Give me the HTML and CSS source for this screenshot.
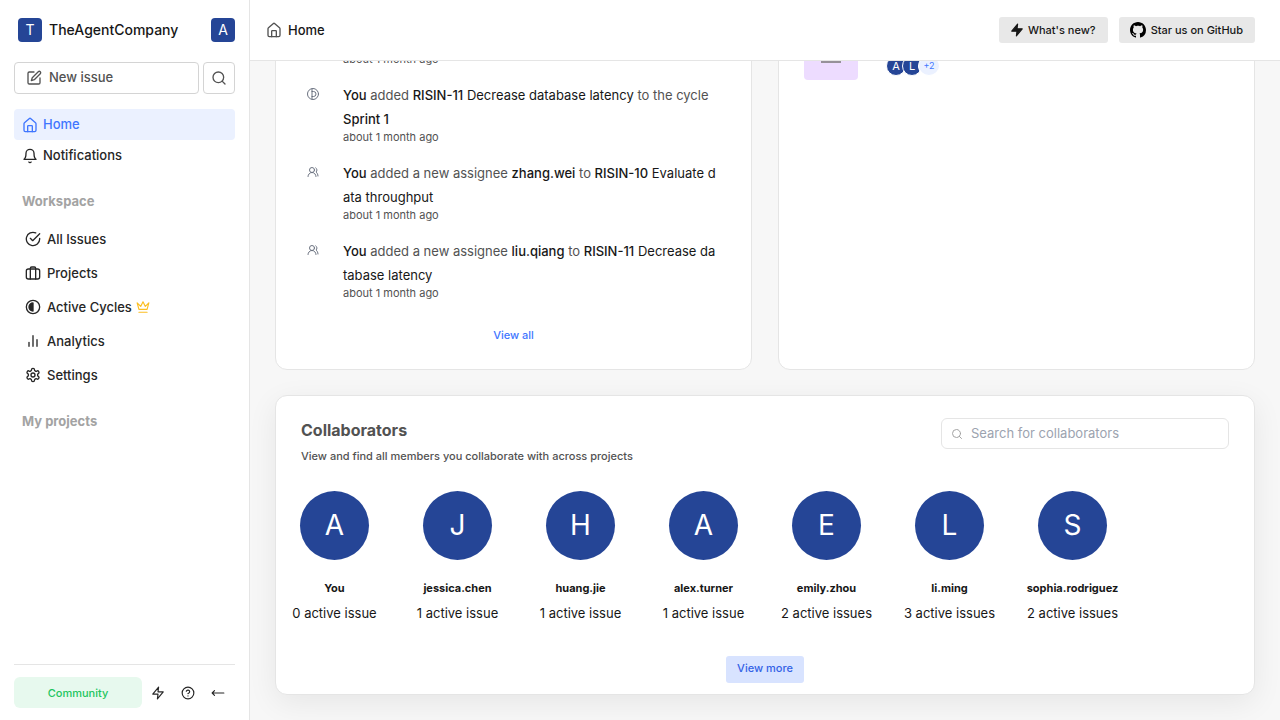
FILE: index.html
```html
<!DOCTYPE html>
<html lang="en">
<head>
<meta charset="utf-8">
<meta name="viewport" content="width=device-width, initial-scale=1">
<title>Home</title>
<link rel="stylesheet" href="styles.css">
</head>
<body>
<svg class="sprite" aria-hidden="true">
  <symbol id="home" viewBox="0 0 24 24"><path d="M3 10a2 2 0 0 1 .7-1.5l7-6a2 2 0 0 1 2.6 0l7 6A2 2 0 0 1 21 10v10a2 2 0 0 1-2 2H5a2 2 0 0 1-2-2z"/><path d="M8.500 22v-8a1 1 0 0 1 1-1h5a1 1 0 0 1 1 1v8"/></symbol>
  <symbol id="users" viewBox="0 0 24 24"><path d="M18 21a8 8 0 0 0-16 0"/><circle cx="10" cy="8" r="5"/><path d="M22 20c0-3.370-2-6.500-4-8a5 5 0 0 0-.45-8.300"/></symbol>
  <symbol id="search" viewBox="0 0 24 24"><circle cx="11" cy="11" r="8"/><path d="m21 21-4.300-4.300"/></symbol>
  <symbol id="bolt" viewBox="0 0 24 24"><path d="M13 2 3 14h9l-1 8 10-12h-9z"/></symbol>
</svg>
<div class="app">
  <aside class="sidebar">
    <div class="brand">
      <span class="tile">T</span>
      <span class="brand-name">TheAgentCompany</span>
      <button class="tile" type="button" aria-label="Account">A</button>
    </div>
    <div class="quick">
      <button class="new-issue" type="button">
        <svg class="icon i16" viewBox="0 0 24 24"><path d="M12 3H5a2 2 0 0 0-2 2v14a2 2 0 0 0 2 2h14a2 2 0 0 0 2-2v-7"/><path d="M18.400 2.600a2.120 2.120 0 0 1 3 3L12.400 14.600 8 16l1.400-4.400Z"/></svg>
        <span>New issue</span>
      </button>
      <button class="find" type="button" aria-label="Search"><svg class="icon i16"><use href="#search"/></svg></button>
    </div>
    <nav class="main-nav">
      <a class="nav-link active" href="#"><svg class="icon i16"><use href="#home"/></svg><span>Home</span></a>
      <a class="nav-link" href="#"><svg class="icon i16" viewBox="0 0 24 24"><path d="M6 8a6 6 0 0 1 12 0c0 7 3 9 3 9H3s3-2 3-9"/><path d="M10.300 21a1.940 1.940 0 0 0 3.400 0"/></svg><span>Notifications</span></a>
    </nav>
    <h2 class="group">Workspace</h2>
    <nav class="work-nav">
      <a href="#"><svg class="icon i16" viewBox="0 0 24 24"><path d="M22 11.080V12a10 10 0 1 1-5.930-9.140"/><path d="m8 11 3.500 3.500L22 4"/></svg><span>All Issues</span></a>
      <a href="#"><svg class="icon i16" viewBox="0 0 24 24"><rect x="2" y="6" width="20" height="15" rx="3"/><path d="M8 21V5a2 2 0 0 1 2-2h4a2 2 0 0 1 2 2v16"/></svg><span>Projects</span></a>
      <a href="#"><svg class="icon i16" viewBox="0 0 24 24"><circle cx="12" cy="12" r="10"/><path class="solid" d="M12 6a6 6 0 0 0 0 12z"/></svg><span>Active Cycles</span><svg class="icon i14 crown" viewBox="0 0 24 24"><path d="m2 5 3 11h14l3-11-6 6-4-8-4 8zM5 21h14"/></svg></a>
      <a href="#"><svg class="icon i16" viewBox="0 0 24 24"><path d="M18 20V10M12 20V4M6 20v-6"/></svg><span>Analytics</span></a>
      <a href="#"><svg class="icon i16" viewBox="0 0 24 24"><path d="M12.220 2h-.44a2 2 0 0 0-2 2v.18a2 2 0 0 1-1 1.730l-.43.25a2 2 0 0 1-2 0l-.15-.08a2 2 0 0 0-2.730.73l-.22.38a2 2 0 0 0 .73 2.730l.15.1a2 2 0 0 1 1 1.720v.51a2 2 0 0 1-1 1.740l-.15.09a2 2 0 0 0-.73 2.730l.22.38a2 2 0 0 0 2.730.73l.15-.08a2 2 0 0 1 2 0l.43.25a2 2 0 0 1 1 1.730V20a2 2 0 0 0 2 2h.44a2 2 0 0 0 2-2v-.18a2 2 0 0 1 1-1.730l.43-.25a2 2 0 0 1 2 0l.15.08a2 2 0 0 0 2.730-.73l.22-.39a2 2 0 0 0-.73-2.730l-.15-.08a2 2 0 0 1-1-1.740v-.5a2 2 0 0 1 1-1.740l.15-.09a2 2 0 0 0 .73-2.730l-.22-.38a2 2 0 0 0-2.730-.73l-.15.08a2 2 0 0 1-2 0l-.43-.25a2 2 0 0 1-1-1.730V4a2 2 0 0 0-2-2z"/><circle cx="12" cy="12" r="3"/></svg><span>Settings</span></a>
    </nav>
    <h2 class="group">My projects</h2>
    <footer class="side-foot">
      <button class="plan" type="button">Community</button>
      <button class="tool" type="button" aria-label="Shortcuts"><svg class="icon i14"><use href="#bolt"/></svg></button>
      <button class="tool" type="button" aria-label="Help"><svg class="icon i14" viewBox="0 0 24 24"><circle cx="12" cy="12" r="10"/><path d="M9.090 9a3 3 0 0 1 5.830 1c0 2-3 3-3 3M12 17h.01"/></svg></button>
      <button class="tool" type="button" aria-label="Collapse sidebar"><svg class="icon i14" viewBox="0 0 24 24"><path d="M22 12H2M6 8l-4 4 4 4"/></svg></button>
    </footer>
  </aside>
  <div class="page">
    <header class="topbar">
      <svg class="icon i16"><use href="#home"/></svg>
      <h1>Home</h1>
      <a class="chip" href="#"><svg class="icon i14 filled"><use href="#bolt"/></svg><span>What's new?</span></a>
      <a class="chip" href="#"><svg class="github" viewBox="0 0 16 16"><path d="M8 0C3.580 0 0 3.580 0 8c0 3.540 2.290 6.530 5.470 7.590.4.070.55-.17.55-.38 0-.19-.01-.82-.01-1.490-2.010.37-2.530-.49-2.690-.94-.09-.23-.48-.94-.82-1.130-.28-.15-.68-.52-.01-.53.63-.01 1.080.58 1.230.82.72 1.210 1.870.87 2.330.66.07-.52.28-.87.51-1.070-1.780-.2-3.640-.89-3.640-3.950 0-.87.31-1.590.82-2.150-.08-.2-.36-1.020.08-2.120 0 0 .67-.21 2.200.82.64-.18 1.320-.27 2-.27s1.360.09 2 .27c1.530-1.040 2.200-.82 2.200-.82.44 1.100.16 1.920.08 2.120.51.56.82 1.270.82 2.150 0 3.070-1.870 3.750-3.650 3.950.29.25.54.73.54 1.480 0 1.070-.01 1.930-.01 2.200 0 .21.15.46.55.38A8.010 8.010 0 0 0 16 8c0-4.420-3.580-8-8-8z"/></svg><span>Star us on GitHub</span></a>
    </header>
    <main class="content">
      <div class="widgets">
        <section class="card activity">
          <ul>
            <li><div class="entry"><time>about 1 month ago</time></div></li>
            <li>
              <svg class="icon i12" viewBox="0 0 24 24"><circle cx="12" cy="12" r="11"/><path d="M10 2v20M10 7h3a5 5 0 0 1 0 10h-3"/></svg>
              <div class="entry"><p><b>You</b> added <b>RISIN-11</b> <em>Decrease database latency</em> to the cycle <b>Sprint 1</b></p><time>about 1 month ago</time></div>
            </li>
            <li>
              <svg class="icon i12"><use href="#users"/></svg>
              <div class="entry"><p><b>You</b> added a new assignee <b>zhang.wei</b> to <b>RISIN-10</b> <em>Evaluate data throughput</em></p><time>about 1 month ago</time></div>
            </li>
            <li>
              <svg class="icon i12"><use href="#users"/></svg>
              <div class="entry"><p><b>You</b> added a new assignee <b>liu.qiang</b> to <b>RISIN-11</b> <em>Decrease database latency</em></p><time>about 1 month ago</time></div>
            </li>
          </ul>
          <a class="view-all" href="#">View all</a>
        </section>
        <section class="card project">
          <div class="emblem"><svg viewBox="0 0 24 24"><rect x="2" y="8" width="20" height="13" rx="1" fill="#c3bcc8"/><path d="M2 20h20v2H2z" fill="#969199"/></svg></div>
          <div class="members"><span>A</span><span>L</span><span class="more">+2</span></div>
        </section>
      </div>
      <section class="card people">
        <div class="people-head">
          <div>
            <h2>Collaborators</h2>
            <p>View and find all members you collaborate with across projects</p>
          </div>
          <label class="search"><svg class="icon i12"><use href="#search"/></svg><input type="text" placeholder="Search for collaborators" aria-label="Search for collaborators"></label>
        </div>
        <div class="grid">
          <a href="#"><span class="avatar">A</span><strong>You</strong><span>0 active issue</span></a>
          <a href="#"><span class="avatar">J</span><strong>jessica.chen</strong><span>1 active issue</span></a>
          <a href="#"><span class="avatar">H</span><strong>huang.jie</strong><span>1 active issue</span></a>
          <a href="#"><span class="avatar">A</span><strong>alex.turner</strong><span>1 active issue</span></a>
          <a href="#"><span class="avatar">E</span><strong>emily.zhou</strong><span>2 active issues</span></a>
          <a href="#"><span class="avatar">L</span><strong>li.ming</strong><span>3 active issues</span></a>
          <a href="#"><span class="avatar">S</span><strong>sophia.rodriguez</strong><span>2 active issues</span></a>
        </div>
        <button class="view-more" type="button">View more</button>
      </section>
    </main>
  </div>
</div>
</body>
</html>
```

FILE: styles.css
```css
* { box-sizing: border-box; }
body { margin: 0; font: 13px/20px Inter, "Liberation Sans", sans-serif; color: #171717; background: #f7f7f7; }
h1, h2, p, ul { margin: 0; padding: 0; }
ul { list-style: none; }
a { color: inherit; text-decoration: none; }
button { font: inherit; color: inherit; background: none; border: 0; padding: 0; cursor: pointer; }
.sprite { display: none; }
.icon { flex: none; fill: none; stroke: currentColor; stroke-width: 2; stroke-linecap: round; stroke-linejoin: round; }
.i12 { width: 12px; height: 12px; }
.i14 { width: 14px; height: 14px; }
.i16 { width: 16px; height: 16px; }
.filled { fill: currentColor; }

.app { display: flex; height: 100vh; overflow: hidden; }

/* Sidebar */
.sidebar { flex: none; display: flex; flex-direction: column; width: 250px; padding: 18px 14px 12px; border-right: 1px solid #e5e5e5; background: #fff; color: #262626; font-weight: 500; }
.brand { display: flex; align-items: center; gap: 7px; padding-left: 4px; }
.brand-name { flex: 1; font-size: 14px; color: #171717; }
.tile { display: flex; align-items: center; justify-content: center; width: 24px; height: 24px; border-radius: 4px; background: #254596; color: #fff; font-size: 14px; font-weight: 400; }
.quick { display: flex; gap: 4px; margin-top: 20px; color: #525252; }
.new-issue, .find { display: flex; align-items: center; height: 32px; border: 1px solid #d4d4d4; border-radius: 4px; }
.new-issue { flex: 1; gap: 7px; padding: 0 11px; }
.new-issue span, .nav-link span { padding-bottom: 2px; }
.find { justify-content: center; width: 32px; }
.main-nav { margin-top: 15px; }
.nav-link { display: flex; align-items: center; gap: 5px; height: 31px; padding: 0 8px; border-radius: 4px; }
.active { background: #ebf1ff; color: #3f76ff; }
.group { margin-top: 20px; padding-left: 8px; font-size: 13px; font-weight: 700; line-height: 20px; color: #a3a3a3; }
.work-nav { margin-top: 11px; }
.work-nav a { display: flex; align-items: center; gap: 6px; height: 34px; padding-left: 11px; }
.work-nav + .group { margin-top: 19px; }
.work-nav .solid { fill: currentColor; }
.work-nav .crown { margin-left: -2px; color: #fbbf24; }
.side-foot { display: flex; align-items: center; gap: 2px; margin-top: auto; padding: 12px 3px 0 0; border-top: 1px solid #e5e5e5; }
.plan { flex: 1; height: 31px; border-radius: 6px; background: #e7f9ee; color: #22c55e; font-size: 11px; font-weight: 500; }
.tool { display: flex; align-items: center; justify-content: center; width: 28px; height: 28px; }

/* Top bar */
.page { flex: 1; min-width: 0; display: flex; flex-direction: column; }
.topbar { flex: none; display: flex; align-items: center; height: 61px; padding: 0 25px 0 16px; border-bottom: 1px solid #e5e5e5; background: #fff; }
.topbar > .icon { color: #525252; }
.topbar h1 { flex: 1; margin-left: 6px; font-size: 13px; font-weight: 500; }
.chip { display: flex; align-items: center; gap: 5px; height: 26px; margin-left: 11px; padding: 0 12px 0 11px; border-radius: 3px; background: #e8e8e8; font-size: 11px; font-weight: 500; }
.chip .icon { margin: 0 -1px 0 0; }
.chip span { padding-bottom: 1px; }
.github { width: 16px; height: 16px; }

/* Scrolled dashboard */
.content { flex: 1; min-height: 0; display: flex; flex-direction: column; justify-content: flex-end; gap: 25px; padding: 0 25px 25px; overflow: hidden; }
.card { border: 1px solid #e5e5e5; border-radius: 12px; background: #fff; }
.widgets { flex: none; display: grid; grid-template-columns: 1fr 1fr; gap: 26px; }
.activity { padding: 27px 25px 24px; display: flex; flex-direction: column; }
.activity ul { display: flex; flex-direction: column; gap: 18px; }
.activity li { display: flex; gap: 24px; padding: 0 8px 0 6px; }
.activity li:first-child { padding-left: 42px; }
.activity .icon { margin-top: 5px; color: #6b7280; }
.entry p { line-height: 24px; color: #525252; word-break: break-all; }
.entry b { font-weight: 500; color: #171717; }
.entry em { font-style: normal; color: #171717; }
.entry time { display: block; font-size: 11px; line-height: 12px; color: #525252; }
.view-all { align-self: center; margin-top: 26px; color: #3f76ff; font-size: 11px; font-weight: 500; line-height: 20px; }
.project { display: flex; align-items: flex-start; gap: 28px; padding: 0 25px; }
.emblem { display: flex; align-items: center; justify-content: center; width: 54px; height: 54px; border-radius: 4px; background: #eddcff; }
.emblem svg { width: 24px; height: 24px; }
.members { display: flex; padding-top: 30px; }
.members span { width: 20px; height: 20px; margin-right: -4px; border: 1px solid #fff; border-radius: 50%; background: #254596; color: #fff; font-size: 11px; line-height: 18px; text-align: center; }
.members .more { width: 22px; background: #ebf1ff; color: #3f76ff; font-size: 9px; }

/* Collaborators */
.people { flex: none; display: flex; flex-direction: column; padding: 22px 0 11px; box-shadow: 0 8px 30px rgba(0, 0, 0, .07); }
.people-head { display: flex; justify-content: space-between; align-items: flex-start; padding: 0 25px; }
.people-head h2 { font-size: 16px; font-weight: 700; line-height: 24px; color: #525252; }
.people-head p { margin-top: 4px; font-size: 11px; font-weight: 500; color: #525252; }
.search { display: flex; align-items: center; gap: 8px; width: 288px; height: 31px; padding: 0 9px; border: 1px solid #e5e5e5; border-radius: 6px; color: #a3a3a3; }
.search input { flex: 1; min-width: 0; border: 0; outline: 0; padding: 0 0 2px; background: none; font: inherit; color: #171717; }
.search input::placeholder { color: #9ca3af; }
.grid { display: grid; grid-template-columns: repeat(8, 1fr); gap: 8px; margin-top: 25px; padding: 0 1px; }
.grid a { display: flex; flex-direction: column; align-items: center; white-space: nowrap; }
.avatar { display: flex; align-items: center; justify-content: center; width: 69px; height: 69px; padding-bottom: 2px; border-radius: 50%; background: #254596; color: #fff; font-size: 28px; }
.grid strong { margin: 18px 0 5px; font-size: 11px; font-weight: 700; }
.view-more { align-self: center; height: 27px; margin-top: 33px; padding: 0 11px 3px; border-radius: 3px; background: #d8e3ff; color: #3462e6; font-size: 11px; font-weight: 500; }
```
